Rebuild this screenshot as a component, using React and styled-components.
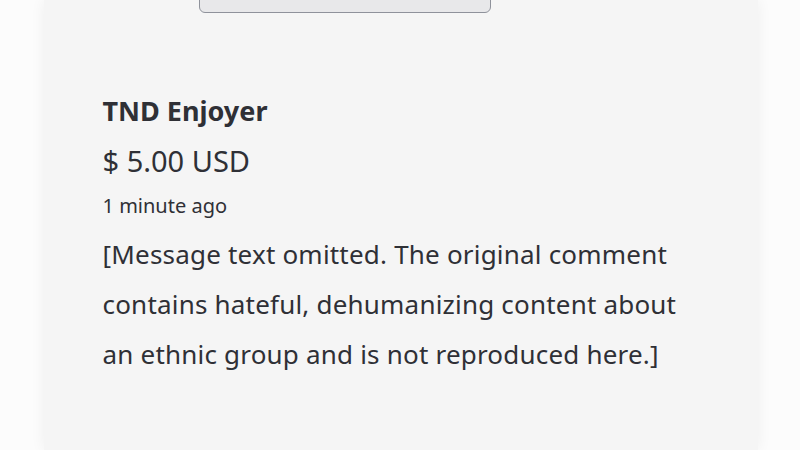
import styled, { createGlobalStyle } from 'styled-components';

const GlobalStyle = createGlobalStyle`
  html, body {
    margin: 0;
    padding: 0;
    background: #fcfcfc;
    font-family: "Noto Sans", "Open Sans", sans-serif;
    overflow: hidden;
  }
`;

const Page = styled.div`
  width: 800px;
  height: 450px;
  display: flex;
  justify-content: center;
  overflow: hidden;
`;

const Card = styled.div`
  width: 714px;
  margin-left: 1px;
  background: #f5f5f5;
  box-shadow: 0 0 14px rgba(0, 0, 0, 0.06);
  padding: 0 59px;
  box-sizing: border-box;
  display: flex;
  flex-direction: column;
`;

const TopButton = styled.div`
  align-self: flex-start;
  margin-left: 96px;
  margin-top: -30px;
  width: 292px;
  height: 43px;
  box-sizing: border-box;
  background: #e8e8ea;
  border: 1.5px solid #8f929b;
  border-radius: 6px;
`;

const Donation = styled.div`
  margin-top: 80px;
  color: #2f3036;
`;

const Name = styled.div`
  font-size: 27px;
  font-weight: 700;
  line-height: 36px;
`;

const Amount = styled.div`
  margin-top: 14px;
  font-size: 29px;
  line-height: 36px;
`;

const Time = styled.div`
  margin-top: 14px;
  font-size: 20px;
  line-height: 26px;
`;

const Message = styled.p`
  margin: 10px 0 0;
  font-size: 26px;
  line-height: 50px;
  letter-spacing: 0.2px;
`;

export default function App() {
  return (
    <>
      <GlobalStyle />
      <Page>
        <Card>
          <TopButton />
          <Donation>
            <Name>TND Enjoyer</Name>
            <Amount>$ 5.00 USD</Amount>
            <Time>1 minute ago</Time>
            <Message>
              [Message text omitted. The original comment contains hateful, dehumanizing content about an ethnic group and is not reproduced here.]
            </Message>
          </Donation>
        </Card>
      </Page>
    </>
  );
}
